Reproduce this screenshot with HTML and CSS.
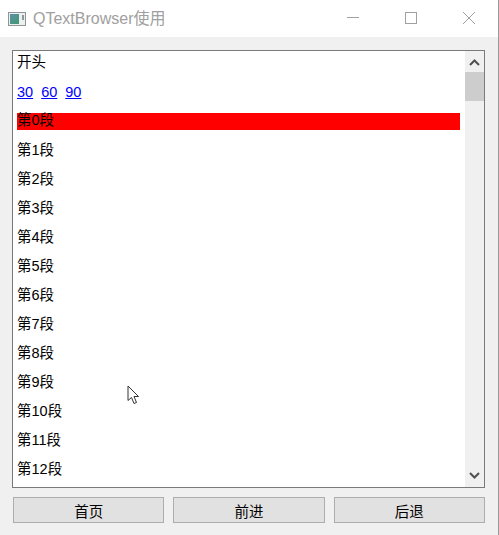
FILE: index.html
```html
<!DOCTYPE html>
<html lang="zh-CN">
<head>
  <meta charset="UTF-8">
  <title>QTextBrowser使用</title>
  <link rel="stylesheet" href="styles.css">
</head>
<body>
  <div class="window">
    <div class="titlebar">
      <svg class="app-icon" width="18" height="16" viewBox="0 0 18 16">
        <defs>
          <linearGradient id="pane" x1="0" y1="0" x2="1" y2="1">
            <stop offset="0" stop-color="#5f8fa8"/>
            <stop offset="1" stop-color="#3f9a70"/>
          </linearGradient>
        </defs>
        <rect x="0.5" y="1.5" width="17" height="13" fill="#eef0f0" stroke="#8c9698"/>
        <rect x="2" y="3" width="9" height="10" fill="url(#pane)"/>
        <rect x="14" y="4" width="2" height="5" fill="#8a9a9c"/>
      </svg>
      <span class="title">QTextBrowser使用</span>
      <div class="win-buttons">
        <svg width="14" height="14" viewBox="0 0 14 14"><path d="M1 6.5H13" stroke="#a0a0a0" fill="none"/></svg>
        <svg width="14" height="14" viewBox="0 0 14 14"><rect x="1.5" y="1.5" width="11" height="11" stroke="#a0a0a0" fill="none"/></svg>
        <svg width="14" height="14" viewBox="0 0 14 14"><path d="M1 1L13 13M13 1L1 13" stroke="#a0a0a0" fill="none"/></svg>
      </div>
    </div>
    <div class="content">
      <div class="browser">
        <div class="doc">
          <p class="line">开头</p>
          <p class="line links"><a href="#p30">30</a><a href="#p60">60</a><a href="#p90">90</a></p>
          <p class="line marked"><span class="mark">第0段</span></p>
          <p class="line">第1段</p>
          <p class="line">第2段</p>
          <p class="line">第3段</p>
          <p class="line">第4段</p>
          <p class="line">第5段</p>
          <p class="line">第6段</p>
          <p class="line">第7段</p>
          <p class="line">第8段</p>
          <p class="line">第9段</p>
          <p class="line">第10段</p>
          <p class="line">第11段</p>
          <p class="line">第12段</p>
        </div>
        <div class="scrollbar">
          <svg class="arrow" width="19" height="21" viewBox="0 0 19 21"><path d="M5 14L9.5 9.5L14 14" stroke="#505050" stroke-width="2" fill="none"/></svg>
          <div class="track"><div class="thumb"></div></div>
          <svg class="arrow" width="19" height="21" viewBox="0 0 19 21"><path d="M5 7L9.5 11.5L14 7" stroke="#505050" stroke-width="2" fill="none"/></svg>
        </div>
      </div>
      <div class="buttons">
        <button class="btn">首页</button>
        <button class="btn">前进</button>
        <button class="btn">后退</button>
      </div>
    </div>
    <svg class="cursor" width="13" height="20" viewBox="0 0 13 20">
      <path d="M1 1V15.5L4.5 12.5L7 18.5L9.5 17.5L7 11.5H11.5Z" fill="#fff" stroke="#333"/>
    </svg>
  </div>
</body>
</html>
```
FILE: styles.css
```css
html, body {
  margin: 0;
  padding: 0;
}

body {
  font-family: "Liberation Sans", "Noto Sans CJK SC", sans-serif;
  background: #f0f0f0;
}

.window {
  position: relative;
  width: 499px;
  height: 535px;
  box-sizing: border-box;
  border-right: 1px solid #9a9a9a;
  overflow: hidden;
}

.titlebar {
  display: flex;
  align-items: center;
  height: 37px;
  padding-left: 8px;
  background: #fff;
}

.app-icon {
  margin-right: 7px;
}

.title {
  font-size: 16px;
  line-height: 38px;
  height: 37px;
  color: #a0a0a0;
}

.win-buttons {
  display: flex;
  gap: 44px;
  margin-left: auto;
  margin-right: 22px;
  margin-bottom: 1px;
}

.content {
  padding: 13px 13px 0 12px;
}

.browser {
  display: flex;
  height: 438px;
  box-sizing: border-box;
  border: 1px solid #7a7a7a;
  background: #fff;
}

.doc {
  flex: 1;
  overflow: hidden;
  padding: 1px 5px 0 4px;
  font-size: 14.5px;
  color: #000;
}

.line {
  margin: 0 0 9px;
  height: 20px;
  line-height: 20px;
}

.links {
  display: flex;
  gap: 8px;
  padding-top: 1px;
}

.line a {
  color: #0000ff;
}

.marked {
  box-sizing: border-box;
  padding-top: 2px;
}

.mark {
  display: block;
  height: 17px;
  line-height: 15px;
  background: #ff0000;
}

.scrollbar {
  display: flex;
  flex-direction: column;
  width: 19px;
  background: #f0f0f0;
}

.arrow {
  flex: none;
}

.track {
  flex: 1;
}

.thumb {
  height: 29px;
  background: #cdcdcd;
}

.buttons {
  display: flex;
  gap: 9px;
  margin-top: 9px;
  padding-left: 1px;
}

.btn {
  flex: 1;
  height: 26px;
  padding: 0;
  font-family: inherit;
  font-size: 14.5px;
  color: #000;
  background: #e1e1e1;
  border: 1px solid #adadad;
}

.cursor {
  position: absolute;
  left: 127px;
  top: 385px;
}
```
